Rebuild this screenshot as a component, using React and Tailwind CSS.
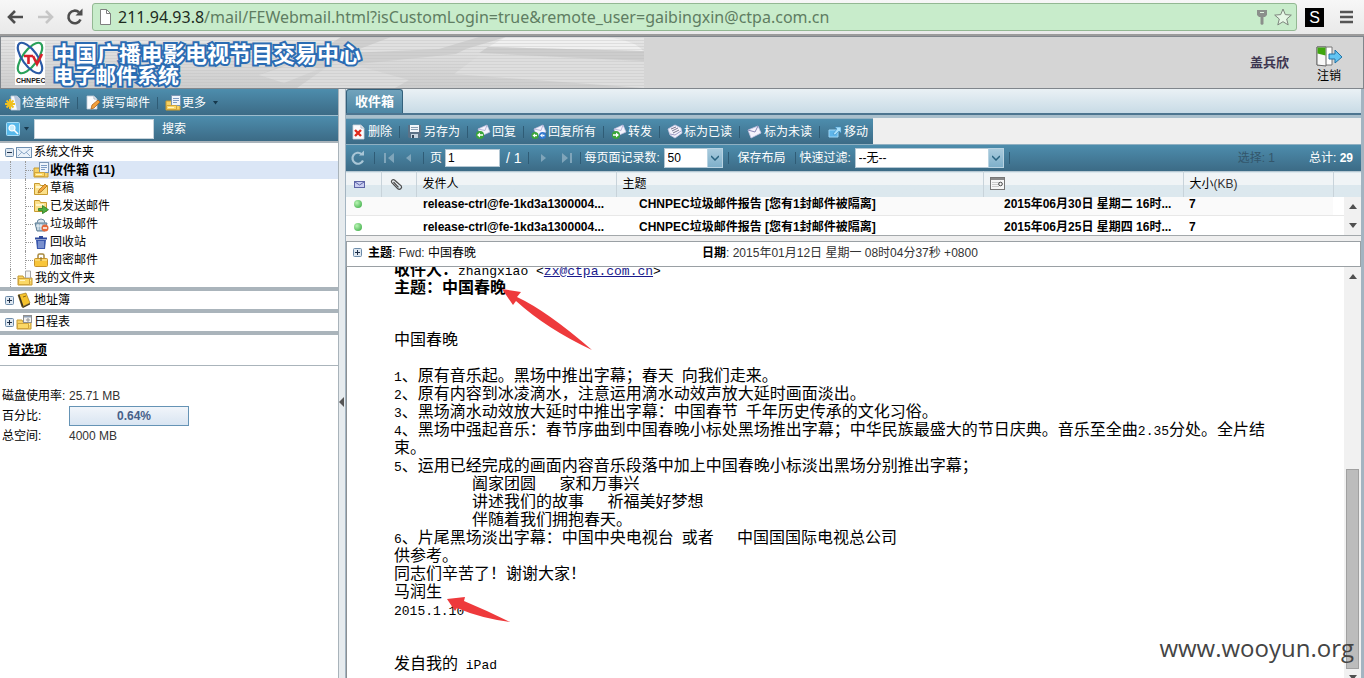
import { Fragment } from 'react'

const BAR = 'bg-linear-to-b from-[#4d8dad] to-[#3c6b86]'

const Svg = ({ w = 16, h = 16, children }) => (
  <svg width={w} height={h} viewBox={`0 0 ${w} ${h}`} className="shrink-0" aria-hidden="true">
    {children}
  </svg>
)

/* ---------- icons ---------- */

const FolderIcon = ({ children }) => (
  <Svg>
    <path d="M1 6h5l1 2h8v7H1z" fill="#f7d264" stroke="#c79a2e" />
    <path d="M2 10h12v1H2z" fill="#fdf0b8" />
    {children}
  </Svg>
)

const InboxIcon = () => (
  <FolderIcon>
    <rect x="6.5" y=".5" width="9" height="10" fill="#eef4fb" stroke="#7d97b5" />
    <path d="M8 3.500h6M8 5.500h6M8 7.500h4" stroke="#7d9cc4" />
    <path d="M1.500 10.500h10v4h-10z" fill="#fbd867" stroke="#d1a43a" />
    <path d="M3 12.500h6" stroke="#fff3c2" />
  </FolderIcon>
)

const DraftIcon = () => (
  <Svg>
    <path d="M1.500 3.500h5l1 2h7v9h-13z" fill="#fbe08a" stroke="#c79a2e" />
    <path d="M3 7h9" stroke="#fff6cf" strokeWidth="2" />
    <path d="M5 13l1-3 6-6 2 2-6 6z" fill="#f3a63c" stroke="#a9741c" strokeWidth=".8" />
  </Svg>
)

const SentIcon = () => (
  <Svg>
    <path d="M1.500 2.500h5l1 2h6v9h-12z" fill="#fbe08a" stroke="#c79a2e" />
    <path d="M3 7h8" stroke="#fff6cf" strokeWidth="2" />
    <path d="M5.500 10.500h4v-3l6 4.200-6 4v-3h-4z" fill="#4eaf3e" stroke="#2b7a25" strokeWidth=".8" />
  </Svg>
)

const JunkIcon = () => (
  <Svg>
    <path d="M4 7a4 4 0 0 1 8 0" fill="#dce6ee" stroke="#6b8aa3" />
    <path d="M2 7h12l-2 8H4z" fill="#9fb9cb" stroke="#5f7e95" />
    <path d="M5 8v6M8 8v6M3 10h10" stroke="#eef4f8" />
    <circle cx="12" cy="12" r="3.500" fill="#e4683a" />
    <path d="M10 12h4" stroke="#fff" strokeWidth="1.500" />
  </Svg>
)

const TrashIcon = () => (
  <Svg>
    <path d="M2 4.500h12M6 3h4" stroke="#2f4a9c" strokeWidth="2" />
    <path d="M3 6h10l-1 9H4z" fill="#3a58ad" />
    <path d="M6 7v7M8 7v7M10 7v7" stroke="#b9c8ee" />
  </Svg>
)

const LockIcon = () => (
  <Svg>
    <path d="M5 7V3.500a1.500 1.500 0 0 1 1.500-1.500h3A1.500 1.500 0 0 1 11 3.500V7" fill="none" stroke="#a8893f" strokeWidth="1.500" />
    <rect x="1.500" y="6.500" width="13" height="8" rx="1" fill="#f8c53a" stroke="#c7922a" />
    <path d="M2 8h12" stroke="#fdeaa2" />
    <path d="M7.500 5h1v4h-1z" fill="#8b6a1e" />
  </Svg>
)

const MyFolderIcon = () => (
  <FolderIcon>
    <path d="M8.500 1v7h5V1z" fill="#f4f4f4" stroke="#a7a7a7" />
    <path d="M1.500 8.500h11v6h-11z" fill="#fbd867" stroke="#d1a43a" />
    <path d="M3 10.500h5" stroke="#fff3c2" />
  </FolderIcon>
)

const MailRootIcon = () => (
  <Svg>
    <rect x=".5" y="3.500" width="15" height="10" fill="#eaf2fa" stroke="#6f8fb0" />
    <path d="M2 5l6 5 6-5M2 12l4-4M14 12l-4-4" fill="none" stroke="#8fabc9" />
  </Svg>
)

const BookIcon = () => (
  <Svg>
    <path d="M2 3l8-2 4 10-8 4z" fill="#f5c22c" stroke="#8e6a10" strokeWidth=".6" />
    <path d="M2 3l1.500-.4L7.500 14 6 15z" fill="#3a3222" />
    <path d="M6 15l8-4v1.500L7 16z" fill="#4a3c1c" />
    <path d="M7 5l3-1" stroke="#8e6a10" />
  </Svg>
)

const CalendarFolderIcon = () => (
  <FolderIcon>
    <rect x="7.500" y="1.500" width="8" height="7" fill="#f3f3f3" stroke="#8f8f8f" />
    <path d="M8 2h7v1.500H8z" fill="#8fa0b5" />
    <circle cx="12" cy="6" r="1.200" fill="none" stroke="#666" strokeWidth=".7" />
    <path d="M1.500 9.500h11v5h-11z" fill="#fbd867" stroke="#d1a43a" />
  </FolderIcon>
)

const CheckMailIcon = () => (
  <Svg>
    <path d="M6 1h6l3 3v11H6z" fill="#f6f9fc" stroke="#c3ced9" strokeWidth=".8" />
    <path d="M9 1h3l3 3v11h-3z" fill="#b7c6dc" />
    <path d="M5 4v10M0 9h10M1.500 5.500l7 7M8.500 5.500l-7 7" stroke="#f0c01e" strokeWidth="2" />
  </Svg>
)

const ComposeIcon = () => (
  <Svg>
    <path d="M2 1h7l3 3v10H2z" fill="#fbfcfe" stroke="#c3ced9" strokeWidth=".8" />
    <path d="M9 1v3h3" fill="none" stroke="#aab7c5" />
    <path d="M6 14l1-4 6-5 2 2-6 6z" fill="#f2a03c" stroke="#b2641a" strokeWidth=".8" />
  </Svg>
)

const DeleteIcon = () => (
  <Svg>
    <path d="M2 1h8l3 3v11H2z" fill="#fbfcfe" stroke="#cfd6de" strokeWidth=".8" />
    <path d="M10 1v3h3" fill="none" stroke="#aab7c5" />
    <path d="M4 6l6 6M10 6l-6 6" stroke="#e02b1d" strokeWidth="2.400" />
  </Svg>
)

const SaveIcon = () => (
  <Svg>
    <path d="M1 1h13v13H2l-1-1z" fill="#5b7287" />
    <path d="M3 1h9v7H3z" fill="#f0f5fa" />
    <path d="M4 3.500h7M4 5.500h7" stroke="#8aa0b5" />
    <path d="M4 10h7v4H4z" fill="#c4d2de" />
    <path d="M5 11h2v3H5z" fill="#34475a" />
  </Svg>
)

const Letter = ({ children }) => (
  <Svg>
    <path d="M3 5l9-4 3 7-9 4z" fill="#f4f3fd" stroke="#c5c3e2" strokeWidth=".7" />
    <path d="M3 5l7 1.500 2-5.500" fill="none" stroke="#a9a7cf" strokeWidth=".8" />
    {children}
  </Svg>
)

const ReplyIcon = () => (
  <Letter>
    <circle cx="5" cy="11" r="4" fill="#3aa63a" />
    <path d="M2 11l3-2.500v1.700h3v1.600H5v1.700z" fill="#fff" />
  </Letter>
)

const ReplyAllIcon = () => (
  <Letter>
    <circle cx="4" cy="11.500" r="3.500" fill="#3aa63a" />
    <circle cx="11.500" cy="11.500" r="3.500" fill="#2f78d0" />
    <path d="M1.500 11.500L4 9.500v4zM9 11.500l2.500-2v4z" fill="#fff" />
    <path d="M4 11.500h2M11.500 11.500h2" stroke="#fff" strokeWidth="1.400" />
  </Letter>
)

const ForwardIcon = () => (
  <Letter>
    <circle cx="5" cy="11" r="4" fill="#3aa63a" />
    <path d="M8 11L5 8.500v1.700H2v1.600h3v1.700z" fill="#fff" />
  </Letter>
)

const MarkReadIcon = () => (
  <Svg>
    <path d="M1 5l7-4 6 3 1 5-7 5-5-3z" fill="#f4f3fb" stroke="#c5c3e2" strokeWidth=".8" />
    <path d="M4 5l5-2M5 7l6-3M6 9l6-3" stroke="#77758f" />
    <path d="M3 10l5 1 6-4" fill="none" stroke="#9e9cc6" />
  </Svg>
)

const MarkUnreadIcon = () => (
  <Svg>
    <path d="M1 6l10-4 3 7-10 5z" fill="#f4f3fd" stroke="#c5c3e2" strokeWidth=".8" />
    <path d="M1 6l7 2 3-6" fill="none" stroke="#8987b5" />
  </Svg>
)

const MoveIcon = () => (
  <Svg>
    <path d="M2 6h9v7H2z" fill="#5fb6ea" stroke="#9ed7f7" />
    <path d="M6 10l4-5-2-2h6v6l-2-2-4 4z" fill="#a9e0fb" stroke="#3b8fc4" strokeWidth=".6" />
  </Svg>
)

const SearchIcon = () => (
  <Svg w={14} h={14}>
    <rect x=".5" y=".5" width="13" height="13" rx="1" fill="#57b8ea" stroke="#a5dcf6" />
    <circle cx="6" cy="6" r="3" fill="#c7ecfb" stroke="#fff" strokeWidth="1.200" />
    <path d="M8 8l4 4" stroke="#fff" strokeWidth="1.600" />
  </Svg>
)

const RefreshIcon = () => (
  <Svg>
    <path d="M13 10.500A5.500 5.500 0 1 1 11.500 4" fill="none" stroke="#a9c6d6" strokeWidth="2.200" />
    <path d="M9 5.500h5V.5z" fill="#a9c6d6" />
  </Svg>
)

const CaretIcon = () => (
  <Svg w={5} h={4}>
    <path d="M0 0h5L2.500 3.500z" fill="#16384c" />
  </Svg>
)

const PageArrow = ({ d }) => (
  <Svg w={12} h={12}>
    <path d={d} fill="#7fa5ba" />
  </Svg>
)

const PaperclipIcon = () => (
  <Svg>
    <path
      d="M11.500 8.500L6.500 4a1.900 1.900 0 0 0-2.700 2.600l6 6.200a2.300 2.300 0 0 0 3.400-3L8 5.500M5.500 6l5 5.300"
      fill="none"
      stroke="#4b4b4b"
      strokeWidth="1.200"
    />
  </Svg>
)

const EnvelopeIcon = () => (
  <Svg w={11} h={9}>
    <rect x=".5" y="1.500" width="10" height="6" fill="#c9cdf0" stroke="#5d64a6" />
    <path d="M1 2l4.500 3L10 2" fill="none" stroke="#5d64a6" />
  </Svg>
)

const DateIcon = () => (
  <Svg>
    <rect x=".5" y="1.500" width="14" height="12" fill="#f7f7f7" stroke="#777" />
    <path d="M1 2h13v2H1z" fill="#8a8a8a" />
    <path d="M2 6.500h7M2 8.500h7M2 10.500h7" stroke="#ccc" />
    <circle cx="10.500" cy="8" r="1.800" fill="none" stroke="#444" />
  </Svg>
)

const LogoutIcon = () => (
  <Svg w={28} h={22}>
    <path d="M2 1h15v18H2z" fill="#fff" stroke="#777" />
    <path d="M2 1h9v19l-9-1z" fill="#f8f8f8" stroke="#666" />
    <path d="M2.500 1.500h8v8l-8-2z" fill="#3fa60f" />
    <path d="M14 8h6V4l7 7-7 6v-4h-6z" fill="#62c4f2" stroke="#2273a6" />
  </Svg>
)

const LogoIcon = () => (
  <Svg w={30} h={44}>
    <path d="M0 0h30v44H0z" fill="#fdfdfd" />
    <g fill="none" strokeWidth="2.200">
      <ellipse cx="15" cy="17" rx="7.500" ry="18" transform="rotate(36 15 17)" stroke="#2aa05a" />
      <ellipse cx="15" cy="17" rx="7.500" ry="18" transform="rotate(-36 15 17)" stroke="#2a5aa6" />
    </g>
    <path d="M9 15h9M13.500 15v8M18 15l4 8 5-10" fill="none" stroke="#d8202a" strokeWidth="2.600" />
    <text x="1" y="42" fontSize="7" fontWeight="bold" fill="#1a1a1a" fontFamily="Liberation Sans">
      CHNPEC
    </text>
  </Svg>
)

const Expander = ({ open }) => (
  <Svg w={9} h={9}>
    <rect x=".5" y=".5" width="8" height="8" rx="1" fill="#dfe8f1" stroke="#6c8ba9" />
    <path d={open ? 'M2 4.500h5' : 'M2 4.500h5M4.500 2v5'} stroke="#1d2f48" />
  </Svg>
)

/* ---------- browser bar ---------- */

const BrowserBar = () => (
  <div className="flex h-9 shrink-0 items-center border-b-2 border-[#9b9b9b] bg-linear-to-b from-[#f7f7f7] to-[#e9e9e9] pl-1.5">
    <button aria-label="Back" className="w-8">
      <Svg w={18} h={16}>
        <path d="M17 8H3M9 2L3 8l6 6" fill="none" stroke="#4d4d4d" strokeWidth="2.600" />
      </Svg>
    </button>
    <button aria-label="Forward" className="w-7">
      <Svg w={18} h={16}>
        <path d="M0 8h13M8 2l6 6-6 6" fill="none" stroke="#c6c6c6" strokeWidth="2.600" />
      </Svg>
    </button>
    <button aria-label="Reload" className="w-[26px]">
      <Svg w={18} h={18}>
        <path d="M14.500 11.500A6.300 6.300 0 1 1 13 4.300" fill="none" stroke="#4d4d4d" strokeWidth="2.600" />
        <path d="M9.500 7.500h7v-7z" fill="#4d4d4d" />
      </Svg>
    </button>
    <div className="flex h-7 min-w-0 flex-1 items-center rounded-[3px] border border-[#93b893] bg-[#c8eccb] px-1">
      <Svg w={18} h={16}>
        <path d="M3.500.5h6l4 4v11h-10z" fill="#fff" stroke="#7f7f7f" />
        <path d="M9.500.5v4h4" fill="none" stroke="#7f7f7f" />
      </Svg>
      <div
        role="textbox"
        aria-label="Address"
        className="ml-[3px] min-w-0 flex-1 truncate font-['Noto_Sans',sans-serif] text-base leading-6 text-[#5f7d62]"
      >
        <span className="text-[#1d2b1e]">211.94.93.8</span>
        /mail/FEWebmail.html?isCustomLogin=true&amp;remote_user=gaibingxin@ctpa.com.cn
      </div>
      <Svg w={12} h={16}>
        <path d="M1 1h10v5L9 8H7.500v7L6 16l-1.500-1V8H3L1 6z" fill="#8b8f8b" />
        <path d="M4 3.500h4" stroke="#dff3df" />
      </Svg>
      <button aria-label="Bookmark" className="ml-1.5">
        <Svg w={18} h={18}>
          <path d="M9 1l2.300 5.600 6 .5-4.600 3.900 1.500 5.900L9 13.700l-5.200 3.200L5.300 11 .7 7.100l6-.5z" fill="#e6f7e6" stroke="#7c857c" />
        </Svg>
      </button>
    </div>
    <span className="ml-2 flex h-[19px] w-[19px] items-center justify-center bg-black text-base leading-[19px] text-white">S</span>
    <button aria-label="Menu" className="mr-2.5 ml-4">
      <Svg w={14} h={14}>
        <path d="M0 2h13M0 7h13M0 12h13" stroke="#555" strokeWidth="2.600" />
      </Svg>
    </button>
  </div>
)

/* ---------- application header ---------- */

const AppHeader = () => (
  <header className="relative flex h-[53px] shrink-0 items-center border border-[#80868c] bg-[#d5d5d5] pl-3.5">
    <svg className="absolute top-0 left-0" width="643" height="51" viewBox="0 0 643 51" aria-hidden="true">
      <defs>
        <linearGradient id="sky" x1="0" y1="0" x2="0" y2="1">
          <stop offset="0" stopColor="#e6e6e6" />
          <stop offset="1" stopColor="#cdcdcd" />
        </linearGradient>
        <pattern id="lines" width="4" height="3" patternUnits="userSpaceOnUse">
          <path d="M0 .5h4" stroke="#bdbdbd" strokeOpacity=".35" />
        </pattern>
      </defs>
      <path d="M0 0h643v51H0z" fill="url(#sky)" />
      <path d="M340 0h165l-40 12-10 5-195 20 60-24z" fill="#cfcfcf" />
      <path d="M505 0h100q30 4 37 14l-155-4z" fill="#f0f0f0" />
      <path d="M487 10l156 4v10l-165-8z" fill="#cdcdcd" />
      <path d="M480 17l163 8v26l-190-14z" fill="#dedede" />
      <path d="M390 0h88l-40 12-90 4z" fill="#e0e0e0" />
      <path d="M296 51l40-28 72 20-14 8zM258 38l40-14 20 8-35 14z" fill="#dcdcdc" />
      <path d="M0 0h643v51H0z" fill="url(#lines)" />
    </svg>
    <div className="relative">
      <LogoIcon />
    </div>
    <h1 className="relative ml-2 font-['Noto_Sans_CJK_SC',sans-serif] text-[22px] leading-[22px] font-bold text-white [paint-order:stroke] [-webkit-text-stroke:4px_#2b6cb3]">
      中国广播电影电视节目交易中心
      <span className="block text-[21px]">电子邮件系统</span>
    </h1>
    <span className="ml-auto text-[13px] font-bold text-[#3d3550]">盖兵欣</span>
    <button className="mr-[18px] ml-6 flex w-8 flex-col items-center pt-1 text-black">
      <LogoutIcon />
      <span className="leading-4">注销</span>
    </button>
  </header>
)

/* ---------- sidebar ---------- */

const folders = [
  { name: '收件箱', count: 11, icon: InboxIcon },
  { name: '草稿', icon: DraftIcon },
  { name: '已发送邮件', icon: SentIcon },
  { name: '垃圾邮件', icon: JunkIcon },
  { name: '回收站', icon: TrashIcon },
  { name: '加密邮件', icon: LockIcon },
]

const Divider = () => <span className="h-3 w-px shrink-0 bg-[#2f5c76]" />

const Sidebar = () => (
  <aside className="w-[339px] shrink-0 border-r border-[#a9b3ba] bg-white">
    <div className={`flex h-[26px] items-center gap-[7px] pt-px pl-[5px] text-white ${BAR}`}>
      <button className="flex items-center gap-px">
        <CheckMailIcon />
        检查邮件
      </button>
      <Divider />
      <button className="flex items-center gap-px">
        <ComposeIcon />
        撰写邮件
      </button>
      <Divider />
      <button className="flex items-center gap-px">
        <InboxIcon />
        更多
        <span className="ml-1.5">
          <CaretIcon />
        </span>
      </button>
    </div>
    <div className={`flex h-[26px] items-center border-t border-[#9dbdce] pl-1.5 text-white ${BAR}`}>
      <button aria-label="搜索选项" className="flex items-center gap-1">
        <SearchIcon />
        <CaretIcon />
      </button>
      <input aria-label="搜索邮件" className="mr-2 ml-[5px] h-5 w-[120px] border border-[#c6d3db] bg-white px-1 text-black" />
      <button>搜索</button>
    </div>

    <div className="border-4 border-x-0 border-t-2 border-[#aab4bb]">
      <div className="flex h-[18px] items-center gap-0.5 pl-[5px]">
        <Expander open />
        <MailRootIcon />
        系统文件夹
      </div>
      <ul className="relative before:absolute before:top-0 before:left-2.5 before:h-full before:border-l before:border-dotted before:border-[#999]">
        {folders.map((f, i) => (
          <li key={f.name} className={`flex h-[18px] items-center pl-[25px] ${i === 0 ? 'bg-[#dbe6f6] font-bold' : ''}`}>
            <span className="h-full border-l border-dotted border-[#999]" />
            <span className="w-[7px] border-t border-dotted border-[#999]" />
            <a href="#folder" className="flex items-center gap-px">
              <f.icon />
              <span className={i === 0 ? 'text-[13px]' : ''}>
                {f.name}
                {f.count && ` (${f.count})`}
              </span>
            </a>
          </li>
        ))}
      </ul>
      <div className="flex h-[18px] items-center gap-0.5 pl-2.5">
        <span className="h-full border-l border-dotted border-[#999]" />
        <span className="w-0.5 border-t border-dotted border-[#999]" />
        <MyFolderIcon />
        <a href="#my">我的文件夹</a>
      </div>
    </div>
    <div className="flex h-[22px] items-center gap-0.5 border-b-4 border-[#aab4bb] pl-[5px]">
      <Expander />
      <BookIcon />
      <a href="#contacts">地址簿</a>
    </div>
    <div className="flex h-[22px] items-center gap-0.5 border-b-4 border-[#aab4bb] pl-[5px]">
      <Expander />
      <CalendarFolderIcon />
      <a href="#calendar">日程表</a>
    </div>
    <div className="flex h-[31px] items-center border-b border-[#aab4bb] pl-2">
      <a href="#preferences" className="text-[13px] font-bold underline">
        首选项
      </a>
    </div>

    <dl className="mt-5 grid grid-cols-[65px_120px] gap-x-0.5 pl-0.5 leading-5">
      <dt className="whitespace-nowrap">磁盘使用率:</dt>
      <dd className="text-[#333]">25.71 MB</dd>
      <dt>百分比:</dt>
      <dd className="h-5 border border-[#6593b5] bg-linear-to-b from-[#f1f5fa] to-[#d9e5f2] pl-2.5 text-center leading-[18px] font-bold text-[#476089]">
        0.64%
      </dd>
      <dt>总空间:</dt>
      <dd className="text-[#333]">4000 MB</dd>
    </dl>
  </aside>
)

/* ---------- mail list ---------- */

const actions = [
  { label: '删除', icon: DeleteIcon },
  { label: '另存为', icon: SaveIcon },
  { label: '回复', icon: ReplyIcon },
  { label: '回复所有', icon: ReplyAllIcon },
  { label: '转发', icon: ForwardIcon },
  { label: '标为已读', icon: MarkReadIcon },
  { label: '标为未读', icon: MarkUnreadIcon },
  { label: '移动', icon: MoveIcon },
]

const Toolbar = () => (
  <div className={`flex h-[26px] w-fit items-center border-t border-[#8fb0c2] pr-px text-white ${BAR}`}>
    {actions.map((a, i) => (
      <Fragment key={a.label}>
        {i > 0 && <Divider />}
        <button className={`flex items-center gap-px ${i === 0 ? 'pl-[5px]' : 'pl-[7px]'} ${i === 7 ? 'pr-1' : 'pr-[7px]'}`}>
          <a.icon />
          {a.label}
        </button>
      </Fragment>
    ))}
  </div>
)

const Select = ({ label, value, className }) => (
  <span className={`relative flex ${className}`}>
    <select aria-label={label} defaultValue={value} className="h-5 w-full appearance-none border border-[#b5c8d4] bg-white pl-[3px] text-black">
      <option>{value}</option>
    </select>
    <span className="pointer-events-none absolute top-0 right-0 flex h-5 w-4 items-center justify-center border border-[#b8d3e2] bg-linear-to-b from-[#a9cbdd] to-[#7fb0ca]">
      <Svg w={8} h={6}>
        <path d="M0 1l4 4 4-4" fill="none" stroke="#29627f" strokeWidth="1.500" />
      </Svg>
    </span>
  </span>
)

const Pager = () => (
  <div className={`flex h-[27px] items-center border-t border-[#8fb0c2] pl-1 whitespace-nowrap text-white ${BAR}`}>
    <button aria-label="刷新" className="mr-2">
      <RefreshIcon />
    </button>
    <Divider />
    <button aria-label="第一页" className="ml-2">
      <PageArrow d="M1 1h2v10H1zM11 1v10L5 6z" />
    </button>
    <button aria-label="上一页" className="mr-2 ml-2">
      <PageArrow d="M8 2v8L3 6z" />
    </button>
    <Divider />
    <label className="ml-1.5 flex items-center gap-[3px]">
      页
      <input defaultValue="1" className="h-[18px] w-[55px] border border-[#b5c8d4] bg-white px-0.5 text-black" />
    </label>
    <span className="mr-1.5 ml-1.5 text-sm">/ 1</span>
    <Divider />
    <button aria-label="下一页" className="ml-2">
      <PageArrow d="M4 2v8l5-4z" />
    </button>
    <button aria-label="最后页" className="mr-[7px] ml-3">
      <PageArrow d="M1 1v10l6-5zM9 1h2v10H9z" />
    </button>
    <Divider />
    <span className="ml-1 w-[79px]">每页面记录数:</span>
    <Select label="每页面记录数" value="50" className="mr-[5px] w-[59px]" />
    <Divider />
    <button className="mx-[9px]">保存布局</button>
    <Divider />
    <span className="ml-1 w-[55px]">快速过滤:</span>
    <Select label="快速过滤" value="--无--" className="mr-[5px] w-[149px]" />
    <Divider />
    <span className="ml-auto text-[#33566b]">选择: 1</span>
    <span className="mr-2 ml-[34px]">
      总计: <b>29</b>
    </span>
  </div>
)

const mails = [
  { from: 'release-ctrl@fe-1kd3a1300004...', subject: 'CHNPEC垃圾邮件报告 [您有1封邮件被隔离]', date: '2015年06月30日 星期二 16时...', size: 7 },
  { from: 'release-ctrl@fe-1kd3a1300004...', subject: 'CHNPEC垃圾邮件报告 [您有1封邮件被隔离]', date: '2015年06月25日 星期四 16时...', size: 7 },
]

const Columns = ({ last }) => (
  <colgroup>
    <col className="w-[35px]" />
    <col className="w-[35px]" />
    <col className="w-[200px]" />
    <col />
    <col className="w-[200px]" />
    <col className="w-[150px]" />
    <col className={last} />
  </colgroup>
)

const TH = 'border-r border-[#c8d3da] pl-1.5 font-normal'

const MailList = () => (
  <section>
    <table className="w-full table-fixed text-left">
      <Columns last="w-7" />
      <thead>
        <tr className="h-[25px] border-t border-[#b7c8d2] bg-linear-to-b from-[#f0f4f6] from-50% to-[#dce8ee] to-50%">
          <th aria-label="状态" className={TH}><span className="ml-0.5 block"><EnvelopeIcon /></span></th>
          <th aria-label="附件" className={TH}><PaperclipIcon /></th>
          <th className={TH}>发件人</th>
          <th className={TH}>主题</th>
          <th aria-label="日期" className={TH}><DateIcon /></th>
          <th className={TH}>大小<span className="text-[#333]">(KB)</span></th>
          <th aria-label="其他" />
        </tr>
      </thead>
    </table>
    <div className="flex h-[39px] overflow-hidden border-b border-[#a3a8ab] bg-white">
      <table className="-mt-1 min-w-0 flex-1 table-fixed font-bold whitespace-nowrap">
        <Columns last="w-[11px]" />
        <tbody>
          {mails.map((m) => (
            <tr key={m.date} className="h-[23px] border-b border-[#e8e8e8] odd:bg-[#fafafa]">
              <td className="pl-2"><span className="block h-2 w-2 rounded-full bg-radial-[at_35%_35%] from-[#b9f5b4] to-[#2fa43a]" /></td>
              <td />
              <td className="overflow-hidden pl-[7px]">{m.from}</td>
              <td className="overflow-hidden pl-[23px]">{m.subject}</td>
              <td className="overflow-hidden pl-[21px]">{m.date}</td>
              <td className="pl-1.5">{m.size}</td>
              <td className="bg-white" />
            </tr>
          ))}
        </tbody>
      </table>
      <div className="flex w-[17px] shrink-0 flex-col items-center justify-around bg-[#f1f1f1]">
        <Svg w={8} h={5}><path d="M0 5h8L4 0z" fill="#505050" /></Svg>
        <Svg w={8} h={5}><path d="M0 0h8L4 5z" fill="#505050" /></Svg>
      </div>
    </div>
  </section>
)

/* ---------- preview ---------- */

// Latin runs are set in a half-width face next to the full-width characters
const Mixed = ({ text }) =>
  text.split(/([\x20-\x7e]+)/).map((part, i) =>
    i % 2 ? (
      <span key={i} className="font-['Liberation_Mono',monospace] text-[13px] leading-[10px]">
        {part}
      </span>
    ) : (
      part
    )
  )

const body = [
  '1、原有音乐起。黑场中推出字幕；春天 向我们走来。',
  '2、原有内容到冰凌滴水，注意运用滴水动效声放大延时画面淡出。',
  '3、黑场滴水动效放大延时中推出字幕：中国春节 千年历史传承的文化习俗。',
  '4、黑场中强起音乐：春节序曲到中国春晚小标处黑场推出字幕；中华民族最盛大的节日庆典。音乐至全曲2.35分处。全片结束。',
  '5、运用已经完成的画面内容音乐段落中加上中国春晚小标淡出黑场分别推出字幕；',
  '          阖家团圆   家和万事兴',
  '          讲述我们的故事   祈福美好梦想',
  '          伴随着我们拥抱春天。',
  '6、片尾黑场淡出字幕：中国中央电视台 或者   中国国国际电视总公司',
  '供参考。',
  '同志们辛苦了！谢谢大家！',
  '马润生',
  '2015.1.10',
]

const Preview = () => (
  <section className="flex min-h-0 flex-1 flex-col">
    <div className="mt-[5px] flex h-[26px] shrink-0 items-center border border-[#9aa0a4] bg-white pb-0.5 pl-1.5">
      <button aria-label="展开" className="mr-1.5 flex">
        <Expander />
      </button>
      <p className="w-[334px]">
        <b>主题</b>: <span className="text-[#333]">Fwd:</span> 中国春晚
      </p>
      <p className="text-[#333]">
        <b className="text-black">日期</b>: 2015年01月12日 星期一 08时04分37秒 +0800
      </p>
    </div>
    <div className="flex min-h-0 flex-1 border-l border-[#8a8f93] bg-white">
      <article className="relative min-w-0 flex-1 overflow-hidden pr-[72px] pl-[47px] font-['Noto_Sans_CJK_SC',sans-serif] text-base leading-[18px] whitespace-pre-wrap">
        <p className="-mt-2">
          <b>收件人：</b>
          <Mixed text="zhangxiao <" />
          <a href="mailto:zx@ctpa.com.cn" className="text-[#1a1a8c] underline">
            <Mixed text="zx@ctpa.com.cn" />
          </a>
          <Mixed text=">" />
        </p>
        <p className="font-bold">主题：中国春晚</p>
        <p className="mt-[34px] mb-[18px]">中国春晚</p>
        {body.map((line) => (
          <p key={line}>
            <Mixed text={line} />
          </p>
        ))}
        <p className="mt-9">
          <Mixed text="发自我的 iPad" />
        </p>
        <svg className="absolute top-0 left-0" width="260" height="400" viewBox="0 0 260 400" aria-hidden="true">
          <path d="M155 22l19 3-4 5Q200 44 245 83 200 62 169 34l-3 4z" fill="#ee3a3c" />
          <path d="M100 332l18-2-1 4q24 10 46 21-30-4-53-14l-2 3z" fill="#ee3a3c" />
        </svg>
      </article>
      <div className="flex w-[17px] shrink-0 flex-col items-center bg-[#f1f1f1]">
        <div className="mt-[7px]"><Svg w={8} h={5}><path d="M0 5h8L4 0z" fill="#505050" /></Svg></div>
        <div className="flex-[191]" />
        <div className="w-[13px] flex-[199] border border-[#a0a0a0] bg-[#bcbcbc]" />
        <div className="mt-1.5"><Svg w={8} h={3}><path d="M0 0h8L4 5z" fill="#505050" /></Svg></div>
      </div>
    </div>
  </section>
)

export default function App() {
  return (
    <div className="relative flex h-screen flex-col overflow-hidden bg-white font-['Liberation_Sans','Noto_Sans_CJK_SC',sans-serif] text-xs leading-4 text-black">
      <BrowserBar />
      <AppHeader />
      <div className="flex min-h-0 flex-1">
        <Sidebar />
        <div className="flex w-1.5 shrink-0 items-center bg-[#e6ebee] pt-9">
          <Svg w={5} h={10}><path d="M5 0v10L0 5z" fill="#555" /></Svg>
        </div>
        <main className="flex min-w-0 flex-1 flex-col border-r-3 border-l border-[#a3b4c1] bg-[#efefef]">
          <nav className="flex h-[26px] shrink-0 items-end border-b-2 border-[#4d7590] bg-linear-to-b from-[#eaf1f5] to-[#c8dbe6]">
            <a href="#inbox" className="flex h-6 w-[57px] items-center justify-center rounded-t-[3px] border border-b-0 border-[#33617c] bg-linear-to-b from-[#71a3bc] to-[#4d86a4] text-[13px] font-bold text-white">
              收件箱
            </a>
          </nav>
          <div className="h-[3px] shrink-0 bg-[#a9bfcc]" />
          <Toolbar />
          <Pager />
          <MailList />
          <Preview />
        </main>
      </div>
      <div className="absolute right-2.5 bottom-3.5 font-['Open_Sans',sans-serif] text-2xl leading-8 text-[#444]">www.wooyun.org</div>
    </div>
  )
}
